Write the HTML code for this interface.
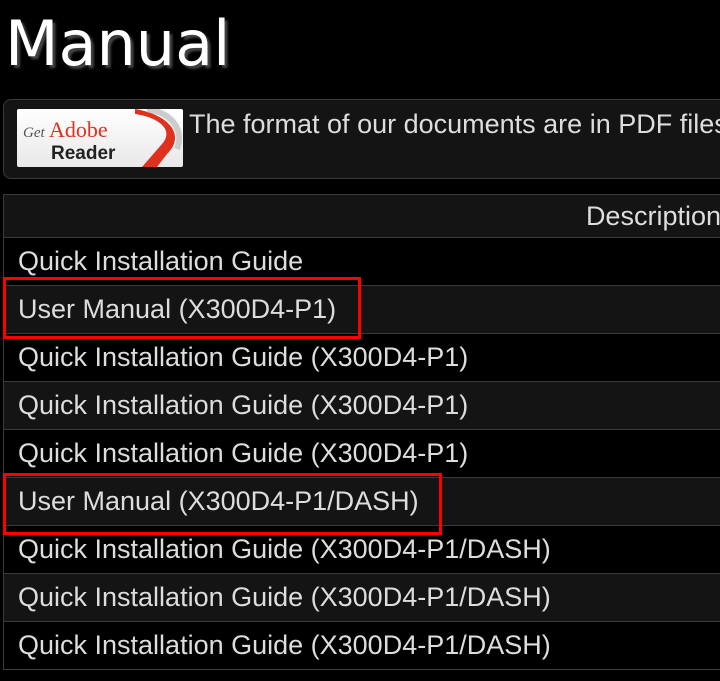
<!DOCTYPE html>
<html><head><meta charset="utf-8"><style>
body{margin:0;background:#000;width:720px;height:681px;overflow:hidden;font-family:"Liberation Sans",Arial,sans-serif;color:#ddd;position:relative}
h1{position:absolute;left:5px;top:4px;margin:0;font-family:"DejaVu Sans",sans-serif;font-weight:normal;font-size:62px;line-height:80px;color:#fff;text-shadow:3px 3px 2px #444}
.info{position:absolute;left:3px;top:99px;width:760px;height:80px;background:#141414;border:1px solid #3a3a3a;border-radius:8px;box-sizing:border-box}
.adobe{position:absolute;left:17px;top:109px;width:166px;height:58px;background:linear-gradient(#fff,#e8e8e8);border-radius:2px;overflow:hidden}
.info-t{position:absolute;left:189px;top:109px;font-size:27px;white-space:nowrap;line-height:30px}
table{position:absolute;left:3px;top:194px;width:760px;border-collapse:collapse;border-left:1px solid #3a3a3a}
td,th{height:47px;border-top:1px solid #3a3a3a;border-bottom:1px solid #3a3a3a;font-size:27px;font-weight:normal;padding:0 0 0 14px;text-align:left;white-space:nowrap}
th{text-align:right;padding-right:0;background:#141414;height:42px}
tr.g td{background:#141414}
.box{position:absolute;border:3px solid #f00;box-sizing:border-box}
</style></head><body>
<h1>Manual</h1>
<div class="info"></div>
<div class="adobe"><svg width="166" height="58">
<path d="M118 0 C150 5 170 25 150 45 L140 58 L125 58 L145 35 C158 20 140 8 118 5Z" fill="#e0301e"/>
<path d="M130 0 C160 5 166 25 160 40" stroke="#ccc" stroke-width="6" fill="none"/>
<text x="6" y="28" font-family="Liberation Serif,serif" font-style="italic" font-size="15" fill="#555">Get</text>
<text x="32" y="28" font-family="Liberation Serif,serif" font-size="22" fill="#e0301e">Adobe</text>
<text x="34" y="50" font-family="Liberation Sans,sans-serif" font-weight="bold" font-size="19" fill="#222">Reader</text>
</svg></div>
<div class="info-t">The format of our documents are in PDF files</div>
<table>
<tr><th><span style="position:relative;left:-42px">Description</span></th></tr>
<tr><td>Quick Installation Guide</td></tr>
<tr class="g"><td>User Manual (X300D4-P1)</td></tr>
<tr><td>Quick Installation Guide (X300D4-P1)</td></tr>
<tr class="g"><td>Quick Installation Guide (X300D4-P1)</td></tr>
<tr><td>Quick Installation Guide (X300D4-P1)</td></tr>
<tr class="g"><td>User Manual (X300D4-P1/DASH)</td></tr>
<tr><td>Quick Installation Guide (X300D4-P1/DASH)</td></tr>
<tr class="g"><td>Quick Installation Guide (X300D4-P1/DASH)</td></tr>
<tr><td>Quick Installation Guide (X300D4-P1/DASH)</td></tr>
</table>
<div class="box" style="left:3px;top:277px;width:358px;height:62px"></div>
<div class="box" style="left:3px;top:473px;width:439px;height:62px"></div>
</body></html>
